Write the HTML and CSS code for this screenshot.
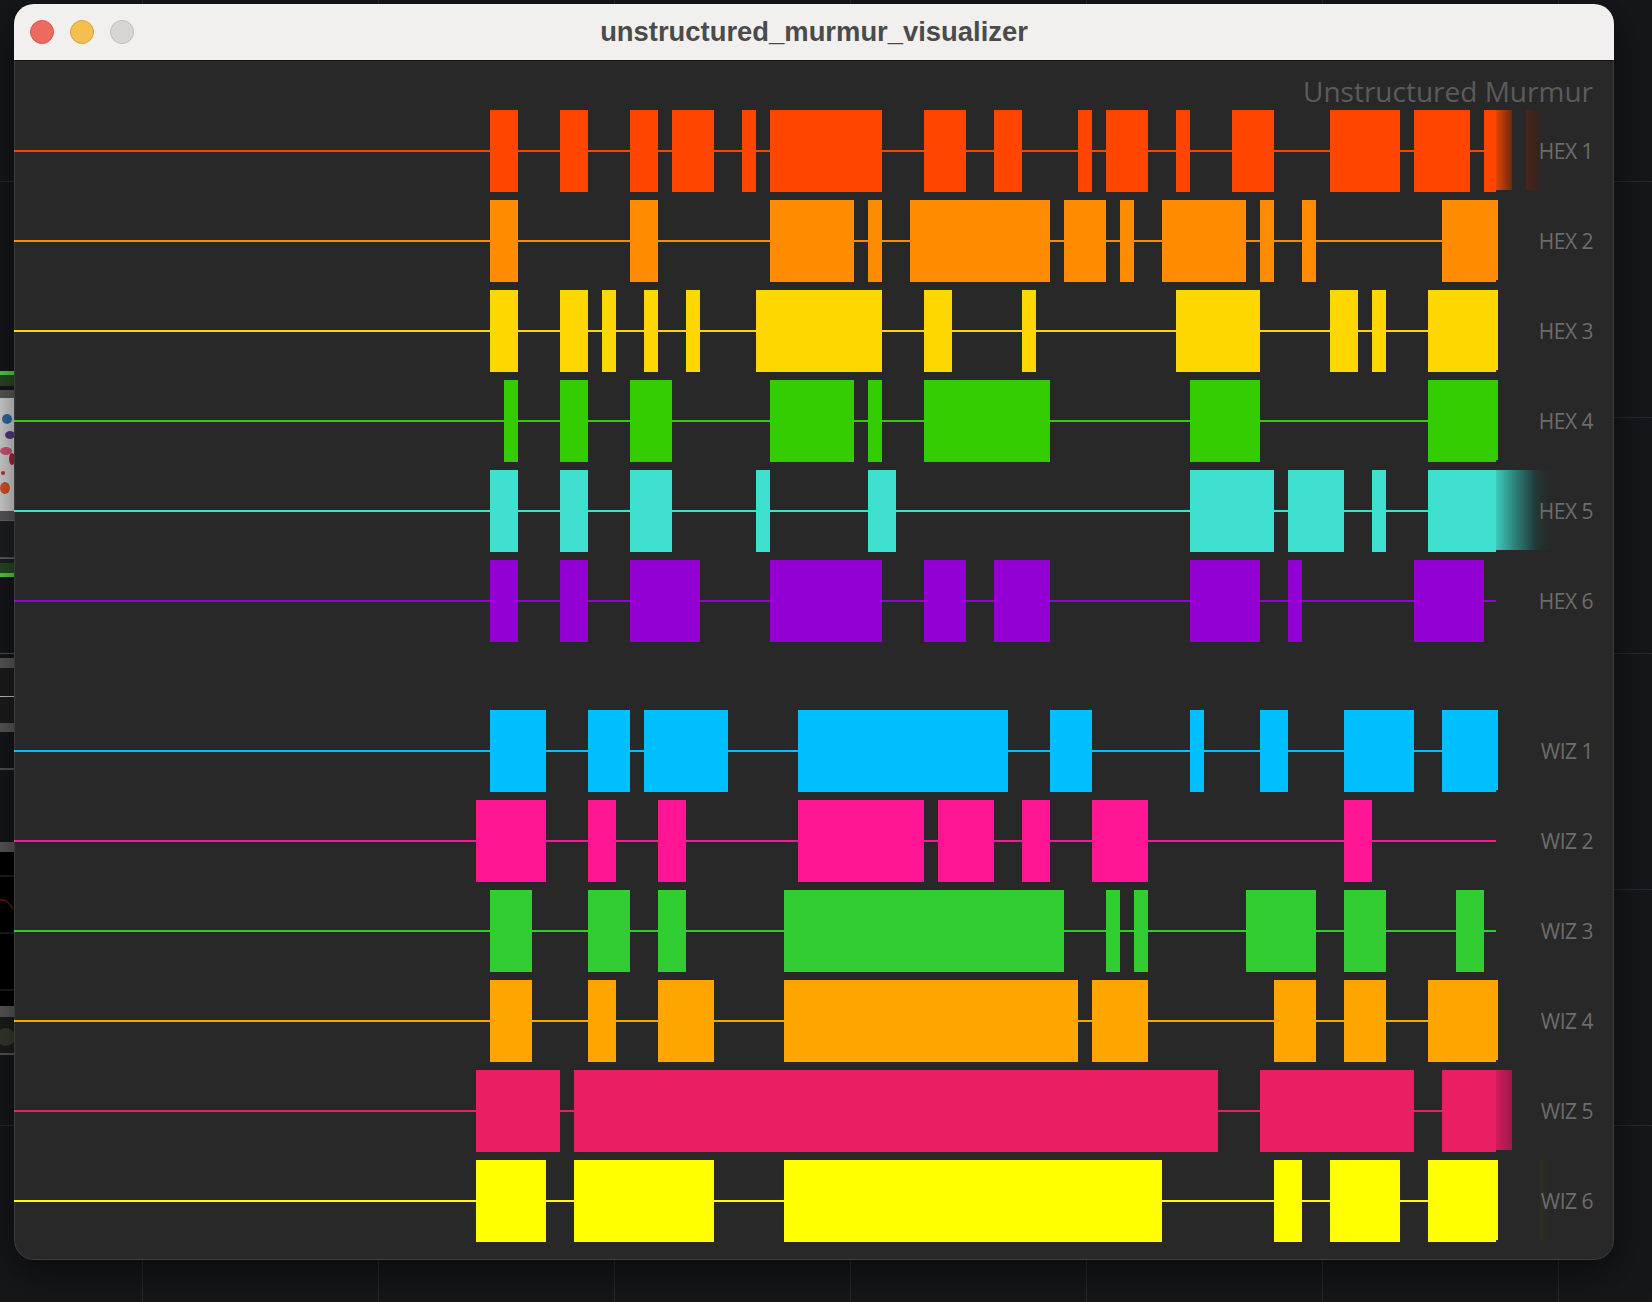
FILE: index.html
```html
<!DOCTYPE html>
<html lang="en">
<head>
<meta charset="utf-8">
<title>unstructured_murmur_visualizer</title>
<link rel="stylesheet" href="styles.css">
</head>
<body>
<div class="backapp">
  <div class="seg desk h371"></div>
  <div class="seg green h4"></div>
  <div class="seg dkgreen h11"></div>
  <div class="seg desk h4"></div>
  <div class="seg gray h8"></div>
  <div class="seg photo h113">
    <svg width="14" height="113" viewBox="0 0 14 113">
      <circle cx="7" cy="21" r="5" fill="#2f6fa8"/>
      <ellipse cx="10" cy="37" rx="5" ry="4" fill="#5a3c8a"/>
      <ellipse cx="6" cy="53" rx="6" ry="4" fill="#d9567a"/>
      <ellipse cx="12" cy="61" rx="3" ry="6" fill="#b0243a"/>
      <ellipse cx="3" cy="75" rx="2" ry="2" fill="#c03030"/>
      <ellipse cx="5" cy="90" rx="5" ry="6" fill="#d8562a"/>
    </svg>
  </div>
  <div class="seg gray h9"></div>
  <div class="seg panel h37"></div>
  <div class="seg line h1"></div>
  <div class="seg panel h5"></div>
  <div class="seg dkgreen h10"></div>
  <div class="seg green h4"></div>
  <div class="seg desk h76"></div>
  <div class="seg line h1"></div>
  <div class="seg desk h4"></div>
  <div class="seg gray h10"></div>
  <div class="seg dark h28"></div>
  <div class="seg pale h1"></div>
  <div class="seg dark h26"></div>
  <div class="seg gray h9"></div>
  <div class="seg desk h36"></div>
  <div class="seg line h2"></div>
  <div class="seg desk h72"></div>
  <div class="seg gray h10"></div>
  <div class="seg black h154">
    <svg width="14" height="154" viewBox="0 0 14 154">
      <line x1="0" y1="24" x2="14" y2="24" stroke="#3a3a3a" stroke-width="1"/>
      <line x1="0" y1="81" x2="14" y2="81" stroke="#3a3a3a" stroke-width="1"/>
      <line x1="0" y1="138" x2="14" y2="138" stroke="#3a3a3a" stroke-width="1"/>
      <path d="M0 48 Q8 47 13 57" fill="none" stroke="#b02418" stroke-width="1"/>
    </svg>
  </div>
  <div class="seg gray h11"></div>
  <div class="seg dark h36">
    <svg width="14" height="36" viewBox="0 0 14 36">
      <circle cx="6" cy="20" r="9" fill="#353b2e"/>
    </svg>
  </div>
  <div class="seg line h2"></div>
</div>

<div class="window">
  <div class="titlebar">
    <div class="lights">
      <span class="light close"></span>
      <span class="light minimize"></span>
      <span class="light zoom"></span>
    </div>
    <div class="title">unstructured_murmur_visualizer</div>
    <div></div>
  </div>

  <div class="content">
    <div class="header">Unstructured Murmur</div>

    <div class="group">
      <div class="row">
        <svg class="track c-hex1" width="1500" height="90" viewBox="0 0 1500 90">
          <defs>
            <linearGradient id="fadeHex1" x1="0" y1="0" x2="1" y2="0">
              <stop offset="0" stop-color="#e24400"/>
              <stop offset="1" stop-color="#6c2a14"/>
            </linearGradient>
            <linearGradient id="ghostHex1" x1="0" y1="0" x2="1" y2="0">
              <stop offset="0" stop-color="#4a2418"/>
              <stop offset="1" stop-color="#34231f"/>
            </linearGradient>
          </defs>
          <line class="wire" x1="0" y1="45" x2="1482" y2="45"/>
          <rect x="476" y="4" width="28" height="82"/>
          <rect x="546" y="4" width="28" height="82"/>
          <rect x="616" y="4" width="28" height="82"/>
          <rect x="658" y="4" width="42" height="82"/>
          <rect x="728" y="4" width="14" height="82"/>
          <rect x="756" y="4" width="112" height="82"/>
          <rect x="910" y="4" width="42" height="82"/>
          <rect x="980" y="4" width="28" height="82"/>
          <rect x="1064" y="4" width="14" height="82"/>
          <rect x="1092" y="4" width="42" height="82"/>
          <rect x="1162" y="4" width="14" height="82"/>
          <rect x="1218" y="4" width="42" height="82"/>
          <rect x="1316" y="4" width="70" height="82"/>
          <rect x="1400" y="4" width="56" height="82"/>
          <rect x="1470" y="4" width="12" height="82"/>
          <rect class="fx" x="1482" y="4" width="16" height="80" fill="url(#fadeHex1)"/>
          <rect class="fx" x="1512" y="4" width="13" height="80" fill="url(#ghostHex1)"/>
        </svg>
        <span class="label">HEX 1</span>
      </div>

      <div class="row">
        <svg class="track c-hex2" width="1500" height="90" viewBox="0 0 1500 90">
          <line class="wire" x1="0" y1="45" x2="1482" y2="45"/>
          <rect x="476" y="4" width="28" height="82"/>
          <rect x="616" y="4" width="28" height="82"/>
          <rect x="756" y="4" width="84" height="82"/>
          <rect x="854" y="4" width="14" height="82"/>
          <rect x="896" y="4" width="140" height="82"/>
          <rect x="1050" y="4" width="42" height="82"/>
          <rect x="1106" y="4" width="14" height="82"/>
          <rect x="1148" y="4" width="84" height="82"/>
          <rect x="1246" y="4" width="14" height="82"/>
          <rect x="1288" y="4" width="14" height="82"/>
          <rect x="1428" y="4" width="54" height="82"/>
          <rect x="1482" y="4" width="2" height="80"/>
        </svg>
        <span class="label">HEX 2</span>
      </div>

      <div class="row">
        <svg class="track c-hex3" width="1500" height="90" viewBox="0 0 1500 90">
          <line class="wire" x1="0" y1="45" x2="1482" y2="45"/>
          <rect x="476" y="4" width="28" height="82"/>
          <rect x="546" y="4" width="28" height="82"/>
          <rect x="588" y="4" width="14" height="82"/>
          <rect x="630" y="4" width="14" height="82"/>
          <rect x="672" y="4" width="14" height="82"/>
          <rect x="742" y="4" width="126" height="82"/>
          <rect x="910" y="4" width="28" height="82"/>
          <rect x="1008" y="4" width="14" height="82"/>
          <rect x="1162" y="4" width="84" height="82"/>
          <rect x="1316" y="4" width="28" height="82"/>
          <rect x="1358" y="4" width="14" height="82"/>
          <rect x="1414" y="4" width="68" height="82"/>
          <rect x="1482" y="4" width="2" height="80"/>
        </svg>
        <span class="label">HEX 3</span>
      </div>

      <div class="row">
        <svg class="track c-hex4" width="1500" height="90" viewBox="0 0 1500 90">
          <line class="wire" x1="0" y1="45" x2="1482" y2="45"/>
          <rect x="490" y="4" width="14" height="82"/>
          <rect x="546" y="4" width="28" height="82"/>
          <rect x="616" y="4" width="42" height="82"/>
          <rect x="756" y="4" width="84" height="82"/>
          <rect x="854" y="4" width="14" height="82"/>
          <rect x="910" y="4" width="126" height="82"/>
          <rect x="1176" y="4" width="70" height="82"/>
          <rect x="1414" y="4" width="68" height="82"/>
          <rect x="1482" y="4" width="2" height="80"/>
        </svg>
        <span class="label">HEX 4</span>
      </div>

      <div class="row">
        <svg class="track c-hex5" width="1500" height="90" viewBox="0 0 1500 90">
          <defs>
            <linearGradient id="fadeHex5" x1="0" y1="0" x2="1" y2="0">
              <stop offset="0" stop-color="#3fc9bb"/>
              <stop offset="0.3" stop-color="#2f857d"/>
              <stop offset="0.65" stop-color="#213b3a"/>
              <stop offset="1" stop-color="#282828" stop-opacity="0"/>
            </linearGradient>
          </defs>
          <line class="wire" x1="0" y1="45" x2="1482" y2="45"/>
          <rect x="476" y="4" width="28" height="82"/>
          <rect x="546" y="4" width="28" height="82"/>
          <rect x="616" y="4" width="42" height="82"/>
          <rect x="742" y="4" width="14" height="82"/>
          <rect x="854" y="4" width="28" height="82"/>
          <rect x="1176" y="4" width="84" height="82"/>
          <rect x="1274" y="4" width="56" height="82"/>
          <rect x="1358" y="4" width="14" height="82"/>
          <rect x="1414" y="4" width="68" height="82"/>
          <rect class="fx" x="1482" y="4" width="60" height="80" fill="url(#fadeHex5)"/>
        </svg>
        <span class="label">HEX 5</span>
      </div>

      <div class="row">
        <svg class="track c-hex6" width="1500" height="90" viewBox="0 0 1500 90">
          <line class="wire" x1="0" y1="45" x2="1482" y2="45"/>
          <rect x="476" y="4" width="28" height="82"/>
          <rect x="546" y="4" width="28" height="82"/>
          <rect x="616" y="4" width="70" height="82"/>
          <rect x="756" y="4" width="112" height="82"/>
          <rect x="910" y="4" width="42" height="82"/>
          <rect x="980" y="4" width="56" height="82"/>
          <rect x="1176" y="4" width="70" height="82"/>
          <rect x="1274" y="4" width="14" height="82"/>
          <rect x="1400" y="4" width="70" height="82"/>
        </svg>
        <span class="label">HEX 6</span>
      </div>
    </div>

    <div class="group">
      <div class="row">
        <svg class="track c-wiz1" width="1500" height="90" viewBox="0 0 1500 90">
          <line class="wire" x1="0" y1="45" x2="1482" y2="45"/>
          <rect x="476" y="4" width="56" height="82"/>
          <rect x="574" y="4" width="42" height="82"/>
          <rect x="630" y="4" width="84" height="82"/>
          <rect x="784" y="4" width="210" height="82"/>
          <rect x="1036" y="4" width="42" height="82"/>
          <rect x="1176" y="4" width="14" height="82"/>
          <rect x="1246" y="4" width="28" height="82"/>
          <rect x="1330" y="4" width="70" height="82"/>
          <rect x="1428" y="4" width="54" height="82"/>
          <rect x="1482" y="4" width="2" height="80"/>
        </svg>
        <span class="label">WIZ 1</span>
      </div>

      <div class="row">
        <svg class="track c-wiz2" width="1500" height="90" viewBox="0 0 1500 90">
          <line class="wire" x1="0" y1="45" x2="1482" y2="45"/>
          <rect x="462" y="4" width="70" height="82"/>
          <rect x="574" y="4" width="28" height="82"/>
          <rect x="644" y="4" width="28" height="82"/>
          <rect x="784" y="4" width="126" height="82"/>
          <rect x="924" y="4" width="56" height="82"/>
          <rect x="1008" y="4" width="28" height="82"/>
          <rect x="1078" y="4" width="56" height="82"/>
          <rect x="1330" y="4" width="28" height="82"/>
        </svg>
        <span class="label">WIZ 2</span>
      </div>

      <div class="row">
        <svg class="track c-wiz3" width="1500" height="90" viewBox="0 0 1500 90">
          <line class="wire" x1="0" y1="45" x2="1482" y2="45"/>
          <rect x="476" y="4" width="42" height="82"/>
          <rect x="574" y="4" width="42" height="82"/>
          <rect x="644" y="4" width="28" height="82"/>
          <rect x="770" y="4" width="280" height="82"/>
          <rect x="1092" y="4" width="14" height="82"/>
          <rect x="1120" y="4" width="14" height="82"/>
          <rect x="1232" y="4" width="70" height="82"/>
          <rect x="1330" y="4" width="42" height="82"/>
          <rect x="1442" y="4" width="28" height="82"/>
        </svg>
        <span class="label">WIZ 3</span>
      </div>

      <div class="row">
        <svg class="track c-wiz4" width="1500" height="90" viewBox="0 0 1500 90">
          <line class="wire" x1="0" y1="45" x2="1482" y2="45"/>
          <rect x="476" y="4" width="42" height="82"/>
          <rect x="574" y="4" width="28" height="82"/>
          <rect x="644" y="4" width="56" height="82"/>
          <rect x="770" y="4" width="294" height="82"/>
          <rect x="1078" y="4" width="56" height="82"/>
          <rect x="1260" y="4" width="42" height="82"/>
          <rect x="1330" y="4" width="42" height="82"/>
          <rect x="1414" y="4" width="68" height="82"/>
          <rect x="1482" y="4" width="2" height="80"/>
        </svg>
        <span class="label">WIZ 4</span>
      </div>

      <div class="row">
        <svg class="track c-wiz5" width="1500" height="90" viewBox="0 0 1500 90">
          <defs>
            <linearGradient id="fadeWiz5" x1="0" y1="0" x2="1" y2="0">
              <stop offset="0" stop-color="#d11d5c"/>
              <stop offset="1" stop-color="#9c1a4a"/>
            </linearGradient>
          </defs>
          <line class="wire" x1="0" y1="45" x2="1482" y2="45"/>
          <rect x="462" y="4" width="84" height="82"/>
          <rect x="560" y="4" width="644" height="82"/>
          <rect x="1246" y="4" width="154" height="82"/>
          <rect x="1428" y="4" width="54" height="82"/>
          <rect class="fx" x="1482" y="4" width="16" height="80" fill="url(#fadeWiz5)"/>
        </svg>
        <span class="label">WIZ 5</span>
      </div>

      <div class="row">
        <svg class="track c-wiz6" width="1500" height="90" viewBox="0 0 1500 90">
          <defs>
            <linearGradient id="ghostWiz6" x1="0" y1="0" x2="1" y2="0">
              <stop offset="0" stop-color="#303020"/>
              <stop offset="1" stop-color="#282828" stop-opacity="0.3"/>
            </linearGradient>
          </defs>
          <line class="wire" x1="0" y1="45" x2="1482" y2="45"/>
          <rect x="462" y="4" width="70" height="82"/>
          <rect x="560" y="4" width="140" height="82"/>
          <rect x="770" y="4" width="378" height="82"/>
          <rect x="1260" y="4" width="28" height="82"/>
          <rect x="1316" y="4" width="70" height="82"/>
          <rect x="1414" y="4" width="68" height="82"/>
          <rect x="1482" y="4" width="2" height="80"/>
          <rect class="fx" x="1526" y="4" width="10" height="80" fill="url(#ghostWiz6)"/>
        </svg>
        <span class="label">WIZ 6</span>
      </div>
    </div>
  </div>
</div>
</body>
</html>
```

FILE: styles.css
```css
html, body {
  margin: 0;
  overflow: hidden;
}

body {
  position: relative;
  width: 1652px;
  height: 1302px;
  box-sizing: border-box;
  padding: 4px 0 0 14px;
  background-color: #16171b;
  background-image:
    linear-gradient(to right, #272832 1px, transparent 1px),
    linear-gradient(to bottom, #272832 1px, transparent 1px);
  background-size: 236px 100%, 100% 236px;
  background-position: 142px 0, 0 181px;
  font-family: "Open Sans", "Noto Sans", sans-serif;
}

/* ---- app behind the window (left strip) ---- */
.backapp {
  position: absolute;
  left: 0;
  top: 0;
  width: 14px;
  display: flex;
  flex-direction: column;
}
.seg { flex: none; width: 14px; overflow: hidden; }
.seg svg { display: block; }
.desk { background: transparent; }
.green { background: #5ccf45; }
.dkgreen { background: #284a24; }
.gray { background: #5a5a5a; }
.photo { background: #d8d8d8; }
.panel { background: #1f2024; border-top: 1px solid #6a6a6a; box-sizing: border-box; }
.line { background: #555555; }
.dark { background: #1d1d1d; }
.pale { background: #c8c8c8; }
.black { background: #000000; }
.h1 { height: 1px; } .h2 { height: 2px; } .h4 { height: 4px; } .h5 { height: 5px; }
.h8 { height: 8px; } .h9 { height: 9px; } .h10 { height: 10px; } .h11 { height: 11px; }
.h26 { height: 26px; } .h28 { height: 28px; } .h36 { height: 36px; } .h37 { height: 37px; }
.h72 { height: 72px; } .h76 { height: 76px; } .h113 { height: 113px; } .h154 { height: 154px; }
.h371 { height: 371px; }

/* ---- window ---- */
.window {
  position: relative;
  z-index: 1;
  width: 1600px;
  height: 1256px;
  border-radius: 20px;
  overflow: hidden;
  background: #282828;
  display: flex;
  flex-direction: column;
  box-shadow: 0 12px 40px rgba(0, 0, 0, 0.55);
}
.window::after {
  content: "";
  position: absolute;
  inset: 0;
  border-radius: 20px;
  border: 1px solid rgba(255, 255, 255, 0.1);
  pointer-events: none;
}

.titlebar {
  flex: none;
  height: 56px;
  background: #f1f0ee;
  border-bottom: 1px solid #131313;
  display: grid;
  grid-template-columns: 1fr auto 1fr;
  align-items: center;
  padding: 0 16px;
}
.lights {
  display: flex;
  gap: 16px;
}
.light {
  width: 24px;
  height: 24px;
  border-radius: 50%;
  box-sizing: border-box;
  border: 1px solid;
}
.close { background: #ee6a5f; border-color: #d6554b; }
.minimize { background: #f5bf4f; border-color: #d9a23f; }
.zoom { background: #d7d6d4; border-color: #bebdbb; }
.title {
  font-family: "Liberation Sans", Arial, sans-serif;
  font-weight: bold;
  font-size: 27.4px;
  color: #4b4b4b;
}

/* ---- content ---- */
.content {
  flex: 1;
  display: flex;
  flex-direction: column;
}
.header {
  flex: none;
  height: 45px;
  box-sizing: border-box;
  padding: 11px 21px 0 0;
  text-align: right;
  font-size: 28px;
  line-height: 38px;
  color: #5b5b5b;
}
.group {
  display: flex;
  flex-direction: column;
}
.group + .group {
  margin-top: 60px;
}
.row {
  display: flex;
  align-items: center;
  height: 90px;
}
.track {
  flex: none;
  display: block;
  overflow: visible;
}
.track rect:not(.fx) { fill: currentColor; }
.track .wire { stroke: currentColor; stroke-width: 2; }
.label {
  flex: 1;
  text-align: right;
  padding-right: 21px;
  font-size: 21px;
  line-height: 1;
  letter-spacing: -0.5px;
  color: #6c6c6c;
  white-space: nowrap;
}

.c-hex1 { color: #ff4500; }
.c-hex2 { color: #ff8c00; }
.c-hex3 { color: #ffd700; }
.c-hex4 { color: #33cc00; }
.c-hex5 { color: #40e0d0; }
.c-hex6 { color: #9400d3; }
.c-wiz1 { color: #00bfff; }
.c-wiz2 { color: #ff1493; }
.c-wiz3 { color: #32cd32; }
.c-wiz4 { color: #ffa500; }
.c-wiz5 { color: #e91e63; }
.c-wiz6 { color: #ffff00; }
```
